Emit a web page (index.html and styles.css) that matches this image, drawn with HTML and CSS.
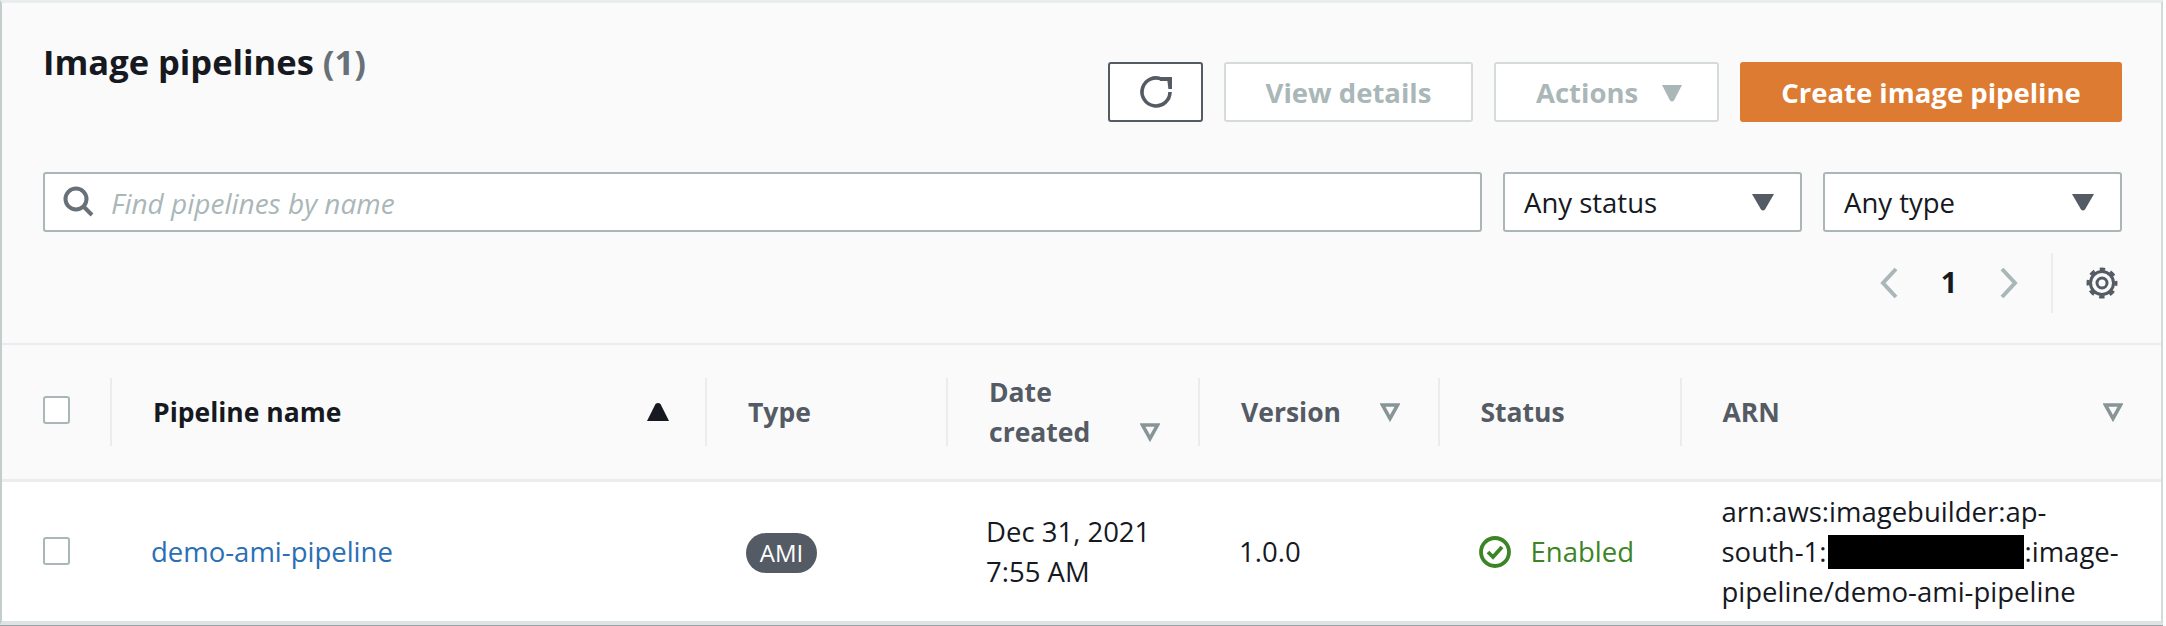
FILE: index.html
```html
<!DOCTYPE html>
<html lang="en">
<head>
<meta charset="utf-8">
<title>Image pipelines</title>
<link rel="stylesheet" href="styles.css">
</head>
<body>
<section class="panel">
  <header class="top">
    <div class="title-row">
      <h2 class="title">Image pipelines <span class="count">(1)</span></h2>
      <div class="actions">
        <button class="btn btn-icon" aria-label="Refresh">
          <svg width="36" height="36" viewBox="0 0 36 36" fill="none"><path d="M24 5.300A14 14 0 1 0 32 18" stroke="#545b64" stroke-width="3.600"/><path d="M22 3h12v12h-3.600l-1-8H22z" fill="#545b64"/></svg>
        </button>
        <button class="btn btn-off view">View details</button>
        <button class="btn btn-off act">Actions <svg class="caret" width="20" height="20" viewBox="0 0 20 20"><path d="M0 3h20l-8 15.500q-2 2-4 0z" fill="#aab7b8"/></svg></button>
        <button class="btn btn-primary">Create image pipeline</button>
      </div>
    </div>
    <div class="filter-row">
      <div class="search">
        <svg width="32" height="32" viewBox="0 0 32 32" fill="none"><circle cx="13" cy="13" r="10.500" stroke="#687078" stroke-width="4"/><path d="M20 20l9 9" stroke="#687078" stroke-width="4"/></svg>
        <span class="placeholder">Find pipelines by name</span>
      </div>
      <div class="select">Any status <svg width="22" height="20" viewBox="0 0 22 20"><path d="M0 2h22l-9 15.500q-2 2-4 0z" fill="#545b64"/></svg></div>
      <div class="select">Any type <svg width="22" height="20" viewBox="0 0 22 20"><path d="M0 2h22l-9 15.500q-2 2-4 0z" fill="#545b64"/></svg></div>
    </div>
    <div class="pager-row">
      <svg class="chev" width="20" height="32" viewBox="0 0 20 32" fill="none"><path d="M17 2L4 16l13 14" stroke="#aab7b8" stroke-width="4"/></svg>
      <span class="page">1</span>
      <svg class="chev" width="20" height="32" viewBox="0 0 20 32" fill="none"><path d="M3 2l13 14L3 30" stroke="#aab7b8" stroke-width="4"/></svg>
      <div class="gear">
        <svg width="34" height="34" viewBox="0 0 34 34" fill="none"><circle cx="17" cy="17" r="5" stroke="#545b64" stroke-width="3"/><circle cx="17" cy="17" r="11.500" stroke="#545b64" stroke-width="3"/><circle cx="17" cy="17" r="14" stroke="#545b64" stroke-width="3" stroke-dasharray="5.500 5.500" stroke-dashoffset="2.750"/></svg>
      </div>
    </div>
  </header>
  <div class="grid head">
    <div class="cell check-cell"><span class="check"></span></div>
    <div class="cell sep name-head"><span>Pipeline name</span><svg width="22" height="20" viewBox="0 0 22 20"><path d="M8.500 2q2.500-2 5 0L22 19H0z" fill="#16191f"/></svg></div>
    <div class="cell sep">Type</div>
    <div class="cell sep date-head"><span>Date<br>created</span><svg class="sort-low" width="20" height="20" viewBox="0 0 20 20" fill="none"><path d="M2.500 3h15L10 16.500z" stroke="#879596" stroke-width="3.600"/></svg></div>
    <div class="cell sep sort-cell"><span>Version</span><svg width="20" height="20" viewBox="0 0 20 20" fill="none"><path d="M2.500 3h15L10 16.500z" stroke="#879596" stroke-width="3.600"/></svg></div>
    <div class="cell sep">Status</div>
    <div class="cell sep sort-cell"><span>ARN</span><svg width="20" height="20" viewBox="0 0 20 20" fill="none"><path d="M2.500 3h15L10 16.500z" stroke="#879596" stroke-width="3.600"/></svg></div>
  </div>
  <div class="grid row">
    <div class="cell check-cell"><span class="check"></span></div>
    <div class="cell"><a class="link" href="#">demo-ami-pipeline</a></div>
    <div class="cell"><span class="badge">AMI</span></div>
    <div class="cell date">Dec 31, 2021<br>7:55 AM</div>
    <div class="cell">1.0.0</div>
    <div class="cell status"><svg width="32" height="32" viewBox="0 0 32 32" fill="none"><circle cx="16" cy="16" r="14" stroke="#3b8524" stroke-width="3.800"/><path d="M9 16l5 5 9-10" stroke="#3b8524" stroke-width="3.800"/></svg>Enabled</div>
    <div class="cell arn">arn:aws:imagebuilder:ap-<br>south-1:<span class="redact"></span>:image-<br>pipeline/demo-ami-pipeline</div>
  </div>
</section>
</body>
</html>
```
FILE: styles.css
```css
* { box-sizing: border-box; }
html, body { margin: 0; padding: 0; background: #fff; }
body { font-family: "Open Sans", "Noto Sans", sans-serif; font-size: 27.5px; color: #16191f; width: 2166px; height: 626px; overflow: hidden; }
.panel { width: 2163px; height: 625px; border-left: 2px solid #c3cdcd; border-right: 2px solid #d5dbdb; border-top: 3px solid #eaeded; border-bottom: 4px solid #dfe3e3; box-shadow: 0 1px 0 #99a5a6; background: #fff; display: flex; flex-direction: column; }
.top { background: #fafafa; height: 340px; padding: 0 39px 0 41px; }
.title-row { display: flex; justify-content: space-between; height: 119px; padding-top: 59px; }
.title { margin: -22px 0 0; font-size: 34.5px; font-weight: 700; line-height: 44px; }
.count { color: #687078; font-weight: 700; }
.actions { display: flex; gap: 21px; height: 60px; }
.btn { font-family: inherit; font-size: 27.5px; font-weight: 700; height: 60px; border-radius: 3px; background: #fff; padding: 0; display: flex; align-items: center; justify-content: center; }
.btn-icon { width: 95px; border: 2px solid #545b64; }
.btn-off { border: 2px solid #d5dbdb; color: #aab7b8; }
.view { width: 249px; }
.act { width: 225px; gap: 24px; justify-content: flex-start; padding-left: 40px; }
.btn-primary { width: 382px; background: #dd7b33; border: 0; color: #fff; }
.filter-row { display: flex; gap: 21px; margin-top: 50px; height: 60px; }
.search { flex: 1; background: #fff; border: 2px solid #aab7b8; border-radius: 3px; display: flex; align-items: center; gap: 16px; padding-left: 18px; }
.placeholder { font-style: italic; font-size: 28px; color: #aab7b8; margin-top: 2px; }
.select { width: 299px; background: #fff; border: 2px solid #aab7b8; border-radius: 3px; display: flex; align-items: center; justify-content: space-between; padding: 0 26px 0 19px; height: 60px; }
.pager-row { display: flex; align-items: center; height: 62px; margin-top: 20px; justify-content: flex-end; }
.chev { display: block; }
.page { width: 100px; text-align: center; font-weight: 700; font-size: 29px; margin-top: -4px; }
.gear { width: 71px; height: 60px; margin-left: 32px; border-left: 2px solid #eaeded; display: flex; align-items: center; justify-content: flex-end; padding-right: 3px; }
.grid { display: grid; grid-template-columns: 108px 595px 241px 252px 239.5px 242px 1fr; }
.head { height: 139px; background: #fafafa; border-top: 2px solid #eaeded; border-bottom: 3px solid #eaeded; font-weight: 700; font-size: 26.5px; color: #545b64; align-items: center; }
.head .cell { height: 68px; }
.row { height: 138px; align-items: center; line-height: 40px; padding-top: 2px; }
.cell { padding-left: 41px; display: flex; align-items: center; }
.head .cell.check-cell { padding-left: 41px; height: auto; margin-top: -4px; }
.row .cell { display: block; }
.row .date { padding-left: 40px; }
.row .status { display: flex; gap: 20px; color: #3b8524; padding-left: 41px; }
.row .arn { padding-left: 42px; }
.sep { border-left: 2px solid #eaeded; line-height: 40px; }
.name-head { color: #16191f; justify-content: space-between; padding-right: 36px; }
.date-head { justify-content: space-between; padding-right: 38px; }
.date-head .sort-low { align-self: flex-end; margin-bottom: 4px; }
.sort-cell { justify-content: space-between; padding-right: 38px; }
.check { display: block; width: 27px; height: 28px; background: #fff; border: 2px solid #aab7b8; border-radius: 3px; }
.row .check { margin-top: -2px; }
.link { text-decoration: none; color: #2a6fb5; }
.badge { display: inline-flex; align-items: center; justify-content: center; width: 71px; height: 40px; border-radius: 20px; background: #545b64; color: #fff; font-size: 24px; }
.redact { display: inline-block; width: 196px; height: 34px; margin-left: 2px; background: #000; vertical-align: -7px; }
```
